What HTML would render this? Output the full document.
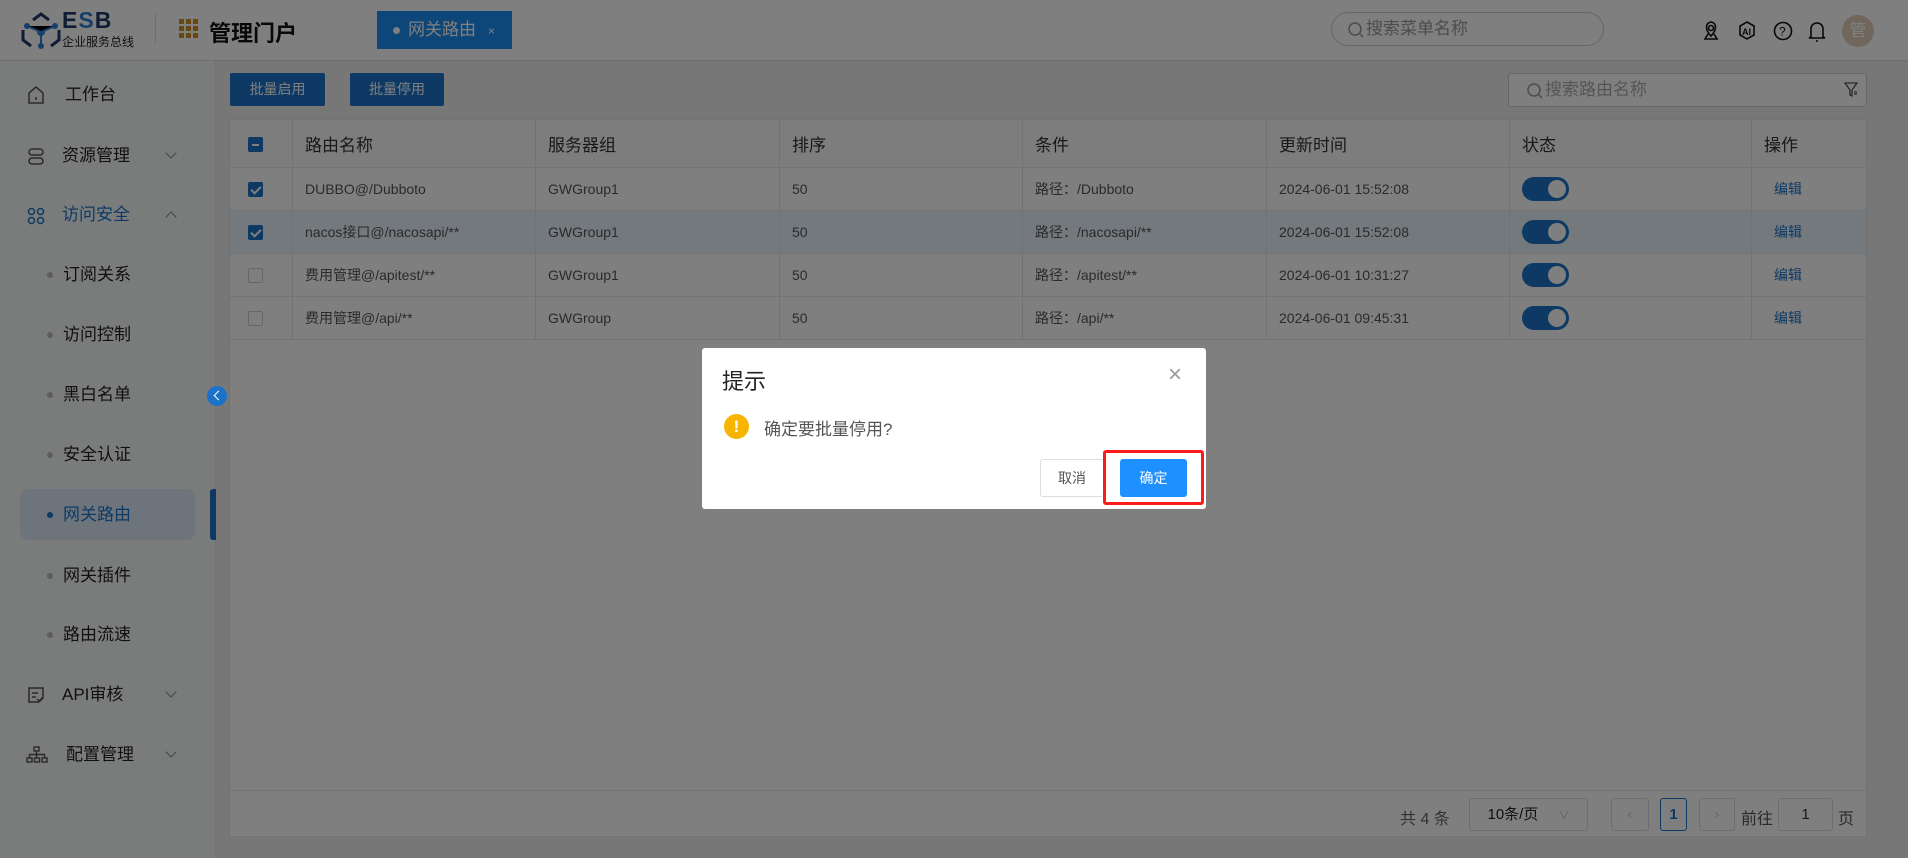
<!DOCTYPE html>
<html><head><meta charset="utf-8"><style>
*{box-sizing:border-box;margin:0;padding:0}
body{width:1908px;height:858px;overflow:hidden;font-family:"Liberation Sans","Noto Sans CJK SC",sans-serif;background:#fff;position:relative;color:#333}
.hdr{position:absolute;left:0;top:0;width:1908px;height:61px;background:#fff;border-bottom:1px solid #ddd}
.side{position:absolute;left:0;top:61px;width:216px;height:797px;background:#f5f6f7;border-right:1px solid #e4e4e4}
.main{position:absolute;left:216px;top:61px;width:1692px;height:797px;background:#efefef}
.abs{position:absolute}
.mi{position:absolute;left:0;width:216px;font-size:17px;color:#222;height:40px;line-height:40px}
.dot{position:absolute;left:47px;top:17px;width:6px;height:6px;border-radius:3px;background:#bbb}
.chev{position:absolute;left:167px;top:13px;width:8px;height:8px;border-right:1.3px solid #888;border-bottom:1.3px solid #888;transform:rotate(45deg)}
.btn{position:absolute;top:12px;height:33px;background:#1a73c9;color:#fff;font-size:14px;text-align:center;line-height:33px;border-radius:2px}
table{position:absolute;left:13px;top:58px;width:1638px;border-collapse:collapse;background:#fff;font-size:14px;color:#555}
td,th{border:1px solid #e6e6e6;height:43px;padding-left:12px;text-align:left;font-weight:normal}
th{height:48px;font-size:17px;color:#333;background:#fafafa}
.cb{display:inline-block;width:15px;height:15px;border:1px solid #ccc;border-radius:2px;vertical-align:middle;position:relative;background:#fff}
.cb.on{background:#1a73c9;border-color:#1a73c9}
.cb.on:after{content:"";position:absolute;left:4px;top:1px;width:4px;height:8px;border-right:2px solid #fff;border-bottom:2px solid #fff;transform:rotate(45deg)}
.cb.ind{background:#1a73c9;border-color:#1a73c9}
.cb.ind:after{content:"";position:absolute;left:3px;top:6px;width:7px;height:2px;background:#fff}
.tg{display:inline-block;width:47px;height:24px;border-radius:12px;background:#1a73c9;position:relative;vertical-align:middle}
.tg:after{content:"";position:absolute;right:3px;top:3px;width:18px;height:18px;border-radius:9px;background:#fff}
.ed{color:#1a73c9;font-size:14px;padding-left:22px}
.ov{position:absolute;left:0;top:0;width:1908px;height:858px;background:rgba(0,0,0,0.5)}
.pg{position:absolute;height:33px;border:1px solid #ddd;background:#fff;border-radius:3px;font-size:15px;text-align:center;line-height:31px}
.mag{display:inline-block;vertical-align:middle;margin-right:2px}
</style></head><body>
<div class="hdr">
 <svg class="abs" style="left:19px;top:12px" width="44" height="38" viewBox="0 0 44 38"><g fill="none" stroke="#1e3a6b" stroke-width="3"><path d="M14 8 L22 2 L30 8"/><path d="M4 18 L4 28 L12 34"/><path d="M40 18 L40 28 L32 34"/></g><g fill="#2e7fd6"><circle cx="22" cy="20" r="4"/><circle cx="8" cy="14" r="3"/><circle cx="36" cy="14" r="3"/><circle cx="22" cy="34" r="3"/></g><g stroke="#2e7fd6" stroke-width="2"><path d="M8 14 L22 20 L36 14 M22 20 L22 34"/></g></svg>
 <div class="abs" style="left:62px;top:7px;font-size:23px;font-weight:bold;color:#1e3a6b;letter-spacing:1px">E<span style="color:#2e7fd6">S</span>B</div>
 <div class="abs" style="left:62px;top:33px;font-size:12px;color:#222">企业服务总线</div>
 <div class="abs" style="left:155px;top:14px;width:1px;height:30px;background:#ddd"></div>
 <svg class="abs" style="left:179px;top:19px" width="20" height="20"><g fill="#c8911e"><rect x="0" y="0" width="5" height="5"/><rect x="7" y="0" width="5" height="5"/><rect x="14" y="0" width="5" height="5"/><rect x="0" y="7" width="5" height="5"/><rect x="7" y="7" width="5" height="5"/><rect x="14" y="7" width="5" height="5"/><rect x="0" y="14" width="5" height="5"/><rect x="7" y="14" width="5" height="5"/><rect x="14" y="14" width="5" height="5"/></g></svg>
 <div class="abs" style="left:209px;top:16px;font-size:22px;font-weight:bold;color:#111">管理门户</div>
 <div class="abs" style="left:377px;top:11px;width:135px;height:38px;background:#1a8cf0;color:#fff;font-size:17px;line-height:38px;padding-left:16px"><span style="display:inline-block;width:7px;height:7px;border-radius:4px;background:#fff;vertical-align:middle;margin-right:8px"></span>网关路由<span style="font-size:12px;margin-left:12px">×</span></div>
 <div class="abs" style="left:1331px;top:12px;width:273px;height:34px;border:1px solid #ccc;border-radius:17px;font-size:17px;color:#999;line-height:32px;padding-left:16px"><svg class="mag" width="16" height="16" fill="none" stroke="#999" stroke-width="1.5"><circle cx="7" cy="7" r="6"/><path d="M11 11 L15 15"/></svg>搜索菜单名称</div>
 <svg class="abs" style="left:1701px;top:20px" width="130" height="22" fill="none" stroke="#111" stroke-width="1.6"><path d="M10 19 L4 19 L7 14 M10 19 L16 19 L13 14"/><path d="M10 16 C4 10 4 3 10 2 C16 3 16 10 10 16Z"/><circle cx="10" cy="8" r="2.5"/><path d="M46 2 L53 6 L53 15 L46 19 L39 15 L39 6Z"/><text x="41" y="15" font-size="9" fill="#111" stroke="none" font-family="Liberation Sans" font-weight="bold">AI</text><circle cx="82" cy="11" r="8.5"/><text x="78" y="15.5" font-size="12" fill="#111" stroke="none" font-family="Liberation Sans">?</text><path d="M110 17 L110 9 C110 5 113 3 116 3 C119 3 122 5 122 9 L122 17 L124 18 L108 18Z M115 21 L117 21"/></svg>
 <div class="abs" style="left:1842px;top:15px;width:32px;height:32px;border-radius:16px;background:#e2cdb8;color:#fff;font-size:17px;text-align:center;line-height:32px">管</div>
</div>
<div class="side">
 <div class="mi" style="top:14px"><svg class="abs" style="left:27px;top:11px" width="18" height="18" fill="none" stroke="#555" stroke-width="1.5"><path d="M2 7 L9 1 L16 7 L16 17 L2 17Z M9 11 L9 14"/></svg><span style="position:absolute;left:65px">工作台</span></div>
 <div class="mi" style="top:75px"><svg class="abs" style="left:27px;top:12px" width="18" height="18" fill="none" stroke="#555" stroke-width="1.5"><rect x="2" y="1" width="14" height="6" rx="3"/><rect x="2" y="10" width="14" height="6" rx="3"/></svg><span style="position:absolute;left:62px">资源管理</span><div class="chev"></div></div>
 <div class="mi" style="top:134px;color:#1a73c9"><svg class="abs" style="left:27px;top:12px" width="18" height="18" fill="none" stroke="#1a73c9" stroke-width="1.5"><circle cx="4.5" cy="4.5" r="3"/><circle cx="13.5" cy="4.5" r="3"/><circle cx="4.5" cy="13.5" r="3"/><circle cx="13.5" cy="13.5" r="3"/></svg><span style="position:absolute;left:62px">访问安全</span><div class="chev" style="transform:rotate(225deg);top:18px"></div></div>
 <div class="mi" style="top:194px"><div class="dot"></div><span style="position:absolute;left:63px">订阅关系</span></div>
 <div class="mi" style="top:254px"><div class="dot"></div><span style="position:absolute;left:63px">访问控制</span></div>
 <div class="mi" style="top:314px"><div class="dot"></div><span style="position:absolute;left:63px">黑白名单</span></div>
 <div class="mi" style="top:374px"><div class="dot"></div><span style="position:absolute;left:63px">安全认证</span></div>
 <div class="abs" style="left:20px;top:428px;width:175px;height:51px;background:#dde9f7;border-radius:8px"></div>
 <div class="abs" style="left:210px;top:428px;width:6px;height:51px;background:#1a73c9;border-radius:3px 0 0 3px"></div>
 <div class="mi" style="top:434px;color:#1a73c9"><div class="dot" style="background:#1a73c9"></div><span style="position:absolute;left:63px">网关路由</span></div>
 <div class="mi" style="top:495px"><div class="dot"></div><span style="position:absolute;left:63px">网关插件</span></div>
 <div class="mi" style="top:554px"><div class="dot"></div><span style="position:absolute;left:63px">路由流速</span></div>
 <div class="mi" style="top:614px"><svg class="abs" style="left:27px;top:11px" width="18" height="18" fill="none" stroke="#555" stroke-width="1.5"><path d="M2 2 L16 2 L16 12 L12 16 L2 16Z M5 7 L11 7 M5 11 L9 11 M10 13 L12 15 L16 11"/></svg><span style="position:absolute;left:62px">API审核</span><div class="chev"></div></div>
 <div class="mi" style="top:674px"><svg class="abs" style="left:26px;top:11px" width="22" height="18" fill="none" stroke="#555" stroke-width="1.4"><rect x="8" y="1" width="5" height="4"/><rect x="1" y="12" width="5" height="4"/><rect x="8.5" y="12" width="5" height="4"/><rect x="16" y="12" width="5" height="4"/><path d="M10.5 5 L10.5 12 M3.5 12 L3.5 8.5 L18.5 8.5 L18.5 12"/></svg><span style="position:absolute;left:66px">配置管理</span><div class="chev"></div></div>
</div>
<div class="abs" style="left:207px;top:386px;width:20px;height:20px;border-radius:10px;background:#1a73c9;z-index:2"><div style="position:absolute;left:8px;top:6px;width:7px;height:7px;border-left:1.5px solid #fff;border-bottom:1.5px solid #fff;transform:rotate(45deg)"></div></div>
<div class="main">
 <div class="btn" style="left:14px;width:95px">批量启用</div>
 <div class="btn" style="left:134px;width:94px">批量停用</div>
 <div class="abs" style="left:1292px;top:12px;width:359px;height:34px;border:1px solid #ccc;background:#fff;border-radius:3px;font-size:17px;color:#aaa;line-height:32px;padding-left:18px"><svg class="mag" width="16" height="16" fill="none" stroke="#999" stroke-width="1.5"><circle cx="7" cy="7" r="6"/><path d="M11 11 L15 15"/></svg>搜索路由名称<svg style="position:absolute;right:8px;top:8px" width="14" height="16" fill="none" stroke="#555" stroke-width="1.3"><path d="M1 1 L13 1 L8 8 L8 14 L6 13 L6 8Z M10 10 L13 10 M10 12 L13 12"/></svg></div>
 <div class="abs" style="left:13px;top:58px;width:1638px;height:718px;background:#fff;border:1px solid #e6e6e6"></div>
 <table>
  <tr><th style="width:63px;padding-left:18px"><span class="cb ind"></span></th><th style="width:243px">路由名称</th><th style="width:244px">服务器组</th><th style="width:243px">排序</th><th style="width:244px">条件</th><th style="width:243px">更新时间</th><th style="width:242px">状态</th><th>操作</th></tr>
  <tr><td style="padding-left:18px"><span class="cb on"></span></td><td>DUBBO@/Dubboto</td><td>GWGroup1</td><td>50</td><td>路径：/Dubboto</td><td>2024-06-01 15:52:08</td><td><span class="tg"></span></td><td class="ed">编辑</td></tr>
  <tr style="background:#e9f2fc"><td style="padding-left:18px"><span class="cb on"></span></td><td>nacos接口@/nacosapi/**</td><td>GWGroup1</td><td>50</td><td>路径：/nacosapi/**</td><td>2024-06-01 15:52:08</td><td><span class="tg"></span></td><td class="ed">编辑</td></tr>
  <tr><td style="padding-left:18px"><span class="cb"></span></td><td>费用管理@/apitest/**</td><td>GWGroup1</td><td>50</td><td>路径：/apitest/**</td><td>2024-06-01 10:31:27</td><td><span class="tg"></span></td><td class="ed">编辑</td></tr>
  <tr><td style="padding-left:18px"><span class="cb"></span></td><td>费用管理@/api/**</td><td>GWGroup</td><td>50</td><td>路径：/api/**</td><td>2024-06-01 09:45:31</td><td><span class="tg"></span></td><td class="ed">编辑</td></tr>
 </table>
 <div class="abs" style="left:13px;top:729px;width:1638px;height:1px;background:#e6e6e6"></div>
 <div class="abs" style="left:1184px;top:744px;font-size:16px;color:#666">共 4 条</div>
 <div class="pg" style="left:1253px;top:737px;width:119px;color:#222">10条/页 <span style="color:#bbb;font-size:11px;margin-left:16px">∨</span></div>
 <div class="pg" style="left:1395px;top:737px;width:38px;color:#ccc">‹</div>
 <div class="pg" style="left:1444px;top:737px;width:27px;border-color:#1a73c9;color:#1a73c9;font-weight:bold">1</div>
 <div class="pg" style="left:1483px;top:737px;width:36px;color:#ccc">›</div>
 <div class="abs" style="left:1525px;top:744px;font-size:16px;color:#555">前往</div>
 <div class="pg" style="left:1562px;top:737px;width:55px">1</div>
 <div class="abs" style="left:1622px;top:744px;font-size:16px;color:#555">页</div>
</div>
<div class="ov"></div>
<div class="abs" style="left:702px;top:348px;width:504px;height:161px;background:#fff;border-radius:3px">
 <div class="abs" style="left:20px;top:16px;font-size:22px;color:#222">提示</div>
 <div class="abs" style="left:466px;top:13px;font-size:24px;color:#999;font-weight:300">×</div>
 <div class="abs" style="left:22px;top:66px;width:25px;height:25px;border-radius:13px;background:#f7b500;color:#fff;font-weight:bold;text-align:center;line-height:25px;font-size:17px">!</div>
 <div class="abs" style="left:62px;top:67px;font-size:17px;color:#555">确定要批量停用?</div>
 <div class="abs" style="left:338px;top:111px;width:64px;height:38px;border:1px solid #ddd;border-radius:3px;text-align:center;line-height:36px;font-size:14px;color:#555">取消</div>
 <div class="abs" style="left:418px;top:111px;width:67px;height:38px;background:#1e90ff;border-radius:3px;text-align:center;line-height:38px;font-size:14px;color:#fff">确定</div>
 <div class="abs" style="left:401px;top:102px;width:101px;height:55px;border:3px solid #ff1a1a;border-radius:3px"></div>
</div>
</body></html>
